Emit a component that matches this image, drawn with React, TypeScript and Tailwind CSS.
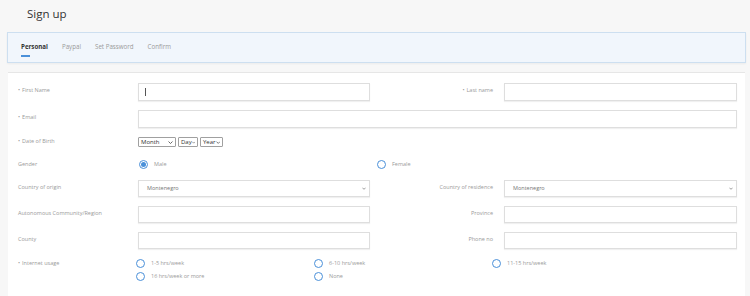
import React from 'react';

const Chevron = ({ className = '' }: { className?: string }) => (
  <svg viewBox="0 0 10 6" className={className} fill="none" stroke="currentColor" strokeWidth="1.6">
    <path d="M1 1l4 4 4-4" />
  </svg>
);

const Label = ({ text, required, right }: { text: string; required?: boolean; right?: boolean }) => (
  <div className={`text-[5.5px] text-[#9a9a9a] leading-none ${right ? 'text-right pr-[11px]' : ''}`}>
    {required && <span className="mr-[2px]">•</span>}
    {text}
  </div>
);

const TextInput = ({ caret }: { caret?: boolean }) => (
  <div className="h-full w-full bg-white border border-[#dedede] shadow-[0_1px_1px_rgba(0,0,0,0.06)] flex items-center pl-[6px]">
    {caret && <div className="w-px h-[8px] bg-[#555]" />}
  </div>
);

const SelectBox = ({ value }: { value: string }) => (
  <div className="h-full w-full bg-white border border-[#dedede] shadow-[0_1px_1px_rgba(0,0,0,0.06)] flex items-center justify-between pl-[8px] pr-[3px]">
    <span className="text-[5.5px] text-[#777] leading-none">{value}</span>
    <Chevron className="w-[4px] h-[3px] text-[#666]" />
  </div>
);

const MiniSelect = ({ value, width }: { value: string; width: string }) => (
  <div className={`${width} h-[10px] border border-[#a0a0a0] bg-white flex items-center justify-between pl-[2px] pr-[2px] rounded-[1px]`}>
    <span className="text-[6px] text-[#333] leading-none">{value}</span>
    <Chevron className="w-[5px] h-[3px] text-[#444]" />
  </div>
);

const Radio = ({ checked, label }: { checked?: boolean; label: string }) => (
  <div className="flex items-center gap-[6px]">
    <div className="w-[9px] h-[9px] rounded-full border border-[#4a90d9] bg-white flex items-center justify-center">
      {checked && <div className="w-[5px] h-[5px] rounded-full bg-[#4a90d9]" />}
    </div>
    <span className="text-[5.5px] text-[#9a9a9a] leading-none">{label}</span>
  </div>
);

const tabs = ['Personal', 'Paypal', 'Set Password', 'Confirm'];

const App: React.FC = () => {
  return (
    <div className="w-[750px] h-[296px] overflow-hidden bg-[#f7f7f7] font-['Open_Sans',sans-serif]">
      <div className="h-[32px] pl-[27px] pt-[8px]">
        <h1 className="text-[11.5px] text-[#333] leading-none font-normal">Sign up</h1>
      </div>

      <div className="mx-[7px] w-[739px] h-[31px] bg-[#f1f6fc] border border-[#cddff0] shadow-[0_1px_2px_rgba(0,0,0,0.05)] flex items-start pt-[11px] pl-[13px] gap-[14px]">
        {tabs.map((t, i) => (
          <div key={t} className="relative leading-none">
            <span className={`block text-[6.2px] leading-none ${i === 0 ? 'font-bold text-[#333]' : 'text-[#9a9a9a]'}`}>{t}</span>
            {i === 0 && <div className="absolute left-0 top-[11px] w-[9px] h-[1.5px] bg-[#4a90d9]" />}
          </div>
        ))}
      </div>

      <div className="mt-[9px] ml-[8px] w-[737px] h-[230px] bg-white border-t border-[#e6e6e6] pl-[10px] pt-[10px]">
        {/* First / last name */}
        <div className="flex items-center h-[18px]">
          <div className="w-[120px] -mt-[3px]"><Label text="First Name" required /></div>
          <div className="w-[232px] h-full"><TextInput caret /></div>
          <div className="w-[134px] -mt-[3px]"><Label text="Last name" required right /></div>
          <div className="w-[233px] h-full"><TextInput /></div>
        </div>

        {/* Email */}
        <div className="flex items-center h-[18px] mt-[9px]">
          <div className="w-[120px] -mt-[3px]"><Label text="Email" required /></div>
          <div className="w-[599px] h-full"><TextInput /></div>
        </div>

        {/* DOB */}
        <div className="flex items-center h-[10px] mt-[9px]">
          <div className="w-[120px]"><Label text="Date of Birth" required /></div>
          <div className="flex gap-[2px]">
            <MiniSelect value="Month" width="w-[38px]" />
            <MiniSelect value="Day" width="w-[20px]" />
            <MiniSelect value="Year" width="w-[23px]" />
          </div>
        </div>

        {/* Gender */}
        <div className="flex items-center h-[9px] mt-[13px]">
          <div className="w-[120px]"><Label text="Gender" /></div>
          <div className="w-[239px] pl-[1px]"><Radio checked label="Male" /></div>
          <Radio label="Female" />
        </div>

        {/* Country */}
        <div className="flex items-center h-[17px] mt-[11px]">
          <div className="w-[120px] -mt-[2px]"><Label text="Country of origin" /></div>
          <div className="w-[232px] h-full"><SelectBox value="Montenegro" /></div>
          <div className="w-[134px] -mt-[2px]"><Label text="Country of residence" right /></div>
          <div className="w-[233px] h-full"><SelectBox value="Montenegro" /></div>
        </div>

        {/* Region / Province */}
        <div className="flex items-center h-[17px] mt-[9px]">
          <div className="w-[120px] -mt-[2px]"><Label text="Autonomous Community/Region" /></div>
          <div className="w-[232px] h-full"><TextInput /></div>
          <div className="w-[134px] -mt-[2px]"><Label text="Province" right /></div>
          <div className="w-[233px] h-full"><TextInput /></div>
        </div>

        {/* County / Phone */}
        <div className="flex items-center h-[17px] mt-[9px]">
          <div className="w-[120px] -mt-[2px]"><Label text="County" /></div>
          <div className="w-[232px] h-full"><TextInput /></div>
          <div className="w-[134px] -mt-[2px]"><Label text="Phone no" right /></div>
          <div className="w-[233px] h-full"><TextInput /></div>
        </div>

        {/* Internet usage */}
        <div className="flex items-start mt-[10px]">
          <div className="w-[118px] pt-[2px]"><Label text="Internet usage" required /></div>
          <div className="grid grid-cols-[178px_178px_178px] gap-y-[4px]">
            <Radio label="1-5 hrs/week" />
            <Radio label="6-10 hrs/week" />
            <Radio label="11-15 hrs/week" />
            <Radio label="16 hrs/week or more" />
            <Radio label="None" />
          </div>
        </div>
      </div>
    </div>
  );
};

export default App;
